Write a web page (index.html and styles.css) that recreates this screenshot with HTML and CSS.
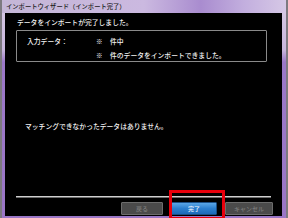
FILE: index.html
```html
<!DOCTYPE html>
<html lang="ja">
<head>
<meta charset="utf-8">
<link rel="stylesheet" href="styles.css">
</head>
<body>
<div class="window">
  <div class="titlebar">インポートウィザード（インポート完了）</div>
  <div class="frame">
    <div class="content">
      <div class="headline">データをインポートが完了しました。</div>
      <div class="group">
        <div class="row"><span class="label">入力データ：</span><span class="num">※</span><span>件中</span></div>
        <div class="row"><span class="label"></span><span class="num">※</span><span>件のデータをインポートできました。</span></div>
      </div>
      <div class="message">マッチングできなかったデータはありません。</div>
      <div class="separator"></div>
      <div class="buttons">
        <div class="btn disabled back">戻る</div>
        <div class="btn primary">完了</div>
        <div class="btn disabled cancel">キャンセル</div>
      </div>
    </div>
  </div>
  <div class="highlight"></div>
</div>
</body>
</html>
```
FILE: styles.css
```css
html, body {
  margin: 0;
  padding: 0;
  background: #6f6f6f;
}
body {
  width: 288px;
  height: 218px;
  overflow: hidden;
  font-family: "Noto Sans CJK JP", "Noto Sans", sans-serif;
}
.window {
  position: relative;
  width: 288px;
  height: 218px;
  box-sizing: border-box;
  border-left: 2px solid #7d7a80;
  border-right: 2px solid #7d7a80;
  background: linear-gradient(to bottom, #d9cce6 0px, #c8b6dc 50px, #9b78c8 62px, #9a76c6 100%);
  display: flex;
  flex-direction: column;
}
.titlebar {
  height: 13px;
  flex: none;
  background: linear-gradient(to right, #c4b6d6 0%, #cbb9e0 50%, #a98ccf 70%, #c2aede 85%, #d6c8e6 100%);
  color: #1a1a1a;
  font-size: 6.3px;
  font-weight: 500;
  line-height: 13px;
  padding-left: 4px;
  white-space: nowrap;
}
.frame {
  flex: 1;
  padding: 0 4px 2px 3px;
  display: flex;
}
.content {
  flex: 1;
  background: #000;
  color: #f2f2f2;
  font-size: 6.8px;
  font-weight: 500;
  line-height: 8px;
  padding: 5px 0 0 11px;
  white-space: nowrap;
}
.headline {
  padding-left: 1px;
}
.group {
  margin-top: 4px;
  width: 251px;
  height: 32px;
  box-sizing: border-box;
  border: 1px solid #8a8a8a;
  border-radius: 1px;
  padding: 6px 0 0 10px;
  display: flex;
  flex-direction: column;
  gap: 6px;
}
.row {
  display: flex;
}
.label {
  width: 69px;
}
.num {
  width: 14px;
  color: #ffffff;
  font-family: "Noto Sans CJK JP", sans-serif;
  font-size: 6.5px;
  font-weight: 700;
  font-variant-emoji: text;
}
.message {
  margin-top: 60px;
  padding-left: 9px;
}
.separator {
  margin-top: 66px;
  width: 255px;
  height: 1px;
  background: #cfcfcf;
  box-shadow: 0 1px 0 #6a6a6a;
}
.buttons {
  margin-top: 5px;
  display: flex;
  padding-left: 105px;
  gap: 8px;
}
.btn {
  height: 13px;
  box-sizing: border-box;
  font-size: 6px;
  line-height: 11px;
  text-align: center;
  border: 1px solid #6c6c6c;
  border-radius: 1px;
}
.disabled {
  background: #4a4a4a;
  color: #7c7c7c;
}
.back {
  width: 42px;
}
.cancel {
  width: 48px;
}
.primary {
  width: 46px;
  background: linear-gradient(to bottom, #5aa6e6 0%, #2b7fcf 50%, #1d6ab8 100%);
  border-color: #1b4f86;
  color: #f4f8ff;
}
.highlight {
  position: absolute;
  left: 167px;
  top: 190px;
  width: 56px;
  height: 30px;
  box-sizing: border-box;
  border: 3px solid #e8000c;
}
```
